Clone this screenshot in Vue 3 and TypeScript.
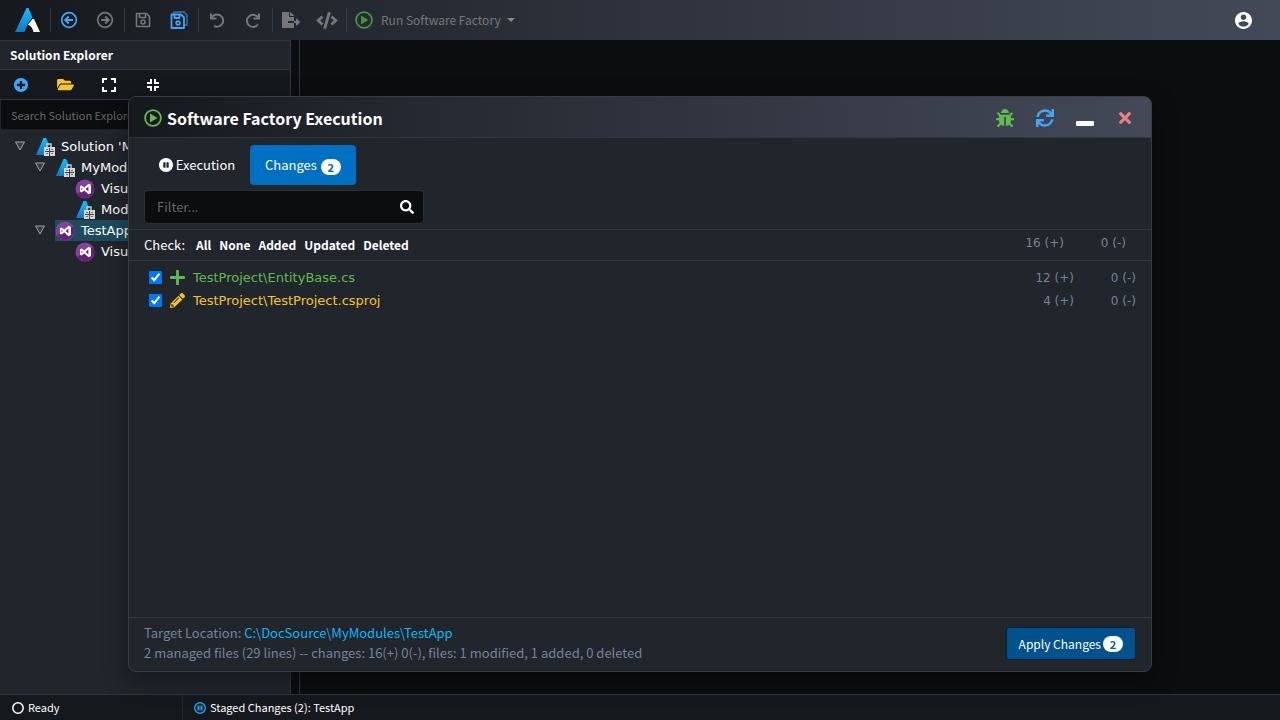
<script setup lang="ts">
import { computed, h, ref } from 'vue'

const shapes: Record<string, [string, string]> = {
  logo: ['0 0 26 26', '<defs><linearGradient id="lg" x1="0" y1="0" x2="0" y2="1"><stop offset="0" stop-color="#12c0ff"/><stop offset="1" stop-color="#1377c4"/></linearGradient></defs><path d="M11.500 1h2l4 9.500-4.500 6-3.500 8.500H0z" fill="url(#lg)"/><path d="M17.500 12h1.500l6 13h-6.500c-1-4-2.500-6-5.500-7.500z" fill="#fff"/>'],
  module: ['0 0 20 20', '<path d="M8.500 1H11l3.500 7-4 2v8H1z" fill="url(#lg)"/><path d="M12 10V7h4v3" fill="none" stroke="#c4c5c6" stroke-width="1.500"/><path d="M9 10h11v9H9z" fill="#d6d7d8"/><path d="M14.500 11v8M10 14.500h9" stroke="#3c4046" stroke-width="1"/><path d="M11 12.500h2M16 12.500h2M11 16.500h2M16 16.500h2" stroke="#6c7075" stroke-width="1"/>'],
  vs: ['0 0 20 20', '<circle cx="10" cy="10" r="9.500" fill="#84429a"/><path d="M2 15A9.500 9.500 0 0 0 18.500 5.800L15 6z" fill="#65207c"/><path fill="#fff" fill-rule="evenodd" d="M5 7.300l1.500-.8 2.800 2.100 4.200-3.800L16 6v8l-2.500 1.200-4.200-3.800-2.800 2.100L5 12.700zM6.400 8.700v2.600L7.900 10zM13.400 7.600v4.800L10.700 10z"/>'],
  back: ['0 0 18 18', '<g fill="none" stroke="currentColor" stroke-width="1.700"><circle cx="9" cy="9" r="7.300"/><path d="M13 9H6M8.800 5.500L5.300 9l3.500 3.500" stroke-width="2"/></g>'],
  forward: ['0 0 18 18', '<g fill="none" stroke="currentColor" stroke-width="1.700"><circle cx="9" cy="9" r="7.300"/><path d="M5 9h7M9.200 5.500L12.700 9l-3.500 3.500" stroke-width="2"/></g>'],
  save: ['0 0 18 18', '<g fill="none" stroke="currentColor" stroke-width="1.600"><path d="M2.500 2.500h10l3 3v10h-13z" stroke-linejoin="round"/><path d="M5.500 3v3.500h6V3"/><circle cx="9" cy="11" r="2"/></g>'],
  saveall: ['0 0 18 18', '<g fill="none" stroke="currentColor" stroke-width="1.800" stroke-linejoin="round"><path d="M4 3V1h10l3 3v10h-2" opacity=".5"/><path d="M1.500 3.500H11l3 3V17H1.500z"/><path d="M4.500 4v3h5V4"/><circle cx="8" cy="12" r="1.800"/></g>'],
  undo: ['0 0 18 18', '<g fill="none" stroke="currentColor" stroke-width="2"><path d="M3 2.500v5h5.500"/><path d="M3.500 7A6.100 6.100 0 1 1 6 14.800"/></g>'],
  redo: ['0 0 18 18', '<g fill="none" stroke="currentColor" stroke-width="2"><path d="M15 2.500v5H9.500"/><path d="M14.500 7A6.100 6.100 0 1 0 14 13.500"/></g>'],
  play: ['0 0 18 18', '<circle cx="9" cy="9" r="7.900" fill="none" stroke="currentColor" stroke-width="1.800"/><path d="M6 4.500v9L13.500 9z" fill="currentColor"/>'],
  export: ['0 0 576 512', '<path fill="currentColor" d="M384 121.900c0-6.300-2.500-12.400-7-16.900L279.100 7c-4.500-4.500-10.600-7-17-7H256v128h128zM571 308l-95.700-96.400c-10.100-10.100-27.400-3-27.400 11.300V288h-64v64h64v65.200c0 14.300 17.300 21.400 27.400 11.300L571 332c6.600-6.600 6.600-17.400 0-24zm-379 28v-32c0-8.800 7.200-16 16-16h176V160H248c-13.200 0-24-10.800-24-24V0H24C10.700 0 0 10.700 0 24v464c0 13.300 10.700 24 24 24h336c13.300 0 24-10.700 24-24V352H208c-8.800 0-16-7.200-16-16z"/>'],
  code: ['0 0 640 512', '<path fill="currentColor" d="M278.900 511.500l-61-17.700c-6.400-1.800-10-8.500-8.200-14.900L346.200 8.700c1.800-6.400 8.500-10 14.900-8.200l61 17.700c6.400 1.800 10 8.500 8.200 14.900L293.800 503.300c-1.900 6.400-8.500 10.100-14.900 8.200zm-114-112.200l43.500-46.400c4.600-4.900 4.300-12.700-.8-17.200L117 256l90.600-79.700c5.100-4.500 5.500-12.300.8-17.200l-43.500-46.400c-4.500-4.800-12.100-5.100-17-.5L3.800 247.200c-5.100 4.700-5.100 12.800 0 17.500l144.100 135.100c4.900 4.600 12.500 4.400 17-.5zm327.200.6l144.100-135.100c5.100-4.700 5.100-12.800 0-17.500L492.100 112.100c-4.800-4.500-12.400-4.300-17 .5L431.600 159c-4.600 4.900-4.300 12.700.8 17.200L523 256l-90.600 79.700c-5.100 4.500-5.500 12.300-.8 17.200l43.500 46.400c4.500 4.900 12.100 5.100 17 .6z"/>'],
  user: ['2 2 20 20', '<path fill="currentColor" d="M12 2C6.480 2 2 6.480 2 12s4.480 10 10 10 10-4.480 10-10S17.520 2 12 2zm0 3c1.900 0 3.300 1.400 3.300 3.200S13.900 11.400 12 11.400 8.700 10 8.700 8.200 10.100 5 12 5zm0 14.200c-2.500 0-4.710-1.280-6-3.220.03-1.990 4-3.080 6-3.080 1.990 0 5.970 1.090 6 3.080-1.290 1.940-3.500 3.220-6 3.220z"/>'],
  addcircle: ['8 8 496 496', '<path fill="currentColor" d="M256 8C119 8 8 119 8 256s111 248 248 248 248-111 248-248S393 8 256 8zm144 276c0 6.600-5.400 12-12 12h-92v92c0 6.600-5.400 12-12 12h-56c-6.600 0-12-5.400-12-12v-92h-92c-6.600 0-12-5.400-12-12v-56c0-6.600 5.400-12 12-12h92v-92c0-6.600 5.400-12 12-12h56c6.600 0 12 5.400 12 12v92h92c6.600 0 12 5.400 12 12v56z"/>'],
  folder: ['0 0 576 512', '<path fill="currentColor" d="M572.694 292.093L500.270 416.248A63.997 63.997 0 0 1 444.989 448H45.025c-18.523 0-30.064-20.093-20.731-36.093l72.424-124.155A64 64 0 0 1 152 256h399.964c18.523 0 30.064 20.093 20.730 36.093zM152 224h328v-48c0-26.510-21.490-48-48-48H272l-64-64H48C21.490 64 0 85.490 0 112v278.046l69.077-118.418C86.214 242.250 117.989 224 152 224z"/>'],
  expand: ['0 0 14 14', '<path d="M1 5V1h4M9 1h4v4M13 9v4H9M5 13H1V9" fill="none" stroke="currentColor" stroke-width="2"/>'],
  compress: ['0 0 14 14', '<path d="M5 1v4H1M9 1v4h4M13 9H9v4M5 13V9H1" fill="none" stroke="currentColor" stroke-width="2"/>'],
  pause: ['8 8 496 496', '<path fill="currentColor" d="M256 8C119 8 8 119 8 256s111 248 248 248 248-111 248-248S393 8 256 8zm-16 328c0 8.800-7.200 16-16 16h-48c-8.800 0-16-7.200-16-16V176c0-8.800 7.200-16 16-16h48c8.800 0 16 7.200 16 16v160zm112 0c0 8.800-7.200 16-16 16h-48c-8.800 0-16-7.200-16-16V176c0-8.800 7.200-16 16-16h48c8.800 0 16 7.200 16 16v160z"/>'],
  staged: ['0 0 12 12', '<circle cx="6" cy="6" r="5.300" fill="none" stroke="currentColor" stroke-width="1.400"/><path d="M3.500 3.500h2v5h-2zM6.500 3.500h2v5h-2z" fill="currentColor"/>'],
  ready: ['0 0 12 12', '<circle cx="6" cy="6" r="5.200" fill="none" stroke="currentColor" stroke-width="1.500"/>'],
  search: ['0 0 512 512', '<path fill="currentColor" d="M505 442.700L405.300 343c-4.500-4.500-10.600-7-17-7H372c27.600-35.300 44-79.700 44-128C416 93.100 322.900 0 208 0S0 93.100 0 208s93.100 208 208 208c48.300 0 92.700-16.400 128-44v16.300c0 6.400 2.500 12.500 7 17l99.700 99.700c9.400 9.400 24.600 9.400 33.900 0l28.300-28.300c9.400-9.400 9.400-24.600.1-34zM208 336c-70.700 0-128-57.200-128-128 0-70.700 57.200-128 128-128 70.700 0 128 57.200 128 128 0 70.700-57.200 128-128 128z"/>'],
  bug: ['0 0 512 512', '<path fill="currentColor" d="M511.988 288.900c-.478 17.430-15.217 31.100-32.653 31.100H424v16c0 21.864-4.882 42.584-13.600 61.145l60.228 60.228c12.496 12.497 12.496 32.758 0 45.255-12.498 12.497-32.759 12.496-45.256 0l-54.736-54.736C345.886 467.965 314.351 480 280 480V236c0-6.627-5.373-12-12-12h-24c-6.627 0-12 5.373-12 12v244c-34.351 0-65.886-12.035-90.636-32.108l-54.736 54.736c-12.498 12.497-32.759 12.496-45.256 0-12.496-12.497-12.496-32.758 0-45.255l60.228-60.228C92.882 378.584 88 357.864 88 336v-16H32.666C15.230 320 .491 306.330.013 288.900-.484 270.816 13.453 256 32 256h56v-58.745l-46.628-46.628c-12.496-12.497-12.496-32.758 0-45.255 12.498-12.497 32.758-12.497 45.256 0L141.255 160h229.489l54.627-54.627c12.498-12.497 32.758-12.497 45.256 0 12.496 12.497 12.496 32.758 0 45.255L424 197.255V256h56c18.547 0 32.484 14.816 31.988 32.900zM257 0c-61.856 0-112 50.144-112 112h224C369 50.144 318.856 0 257 0z"/>'],
  sync: ['0 0 512 512', '<path fill="currentColor" d="M440.650 12.570l4 82.770A247.160 247.160 0 0 0 255.830 8C134.730 8 33.910 94.920 12.290 209.820A12 12 0 0 0 24.090 224h49.050a12 12 0 0 0 11.670-9.260 175.910 175.910 0 0 1 317-56.940l-101.460-4.860a12 12 0 0 0-12.570 12v47.410a12 12 0 0 0 12 12H500a12 12 0 0 0 12-12V12a12 12 0 0 0-12-12h-47.370a12 12 0 0 0-11.980 12.570zM255.830 432a175.610 175.610 0 0 1-146-77.800l101.800 4.870a12 12 0 0 0 12.570-12v-47.400a12 12 0 0 0-12-12H12a12 12 0 0 0-12 12V500a12 12 0 0 0 12 12h47.350a12 12 0 0 0 12-12.600l-4.150-82.570A247.170 247.170 0 0 0 255.830 504c121.110 0 221.930-86.920 243.550-201.820a12 12 0 0 0-11.800-14.180h-49.050a12 12 0 0 0-11.670 9.260A175.860 175.860 0 0 1 255.830 432z"/>'],
  minimize: ['0 0 18 18', '<rect y="12" width="18" height="5" rx="1.200" fill="currentColor"/>'],
  close: ['0 80 352 352', '<path fill="currentColor" d="M242.720 256l100.070-100.070c12.280-12.280 12.280-32.190 0-44.480l-22.240-22.240c-12.280-12.280-32.190-12.280-44.480 0L176 189.280 75.930 89.210c-12.280-12.280-32.190-12.280-44.480 0L9.210 111.450c-12.280 12.280-12.280 32.190 0 44.480L109.280 256 9.210 356.070c-12.280 12.280-12.280 32.190 0 44.480l22.240 22.240c12.280 12.280 32.200 12.280 44.480 0L176 322.720l100.070 100.070c12.280 12.280 32.200 12.280 44.480 0l22.240-22.240c12.280-12.280 12.280-32.190 0-44.480L242.720 256z"/>'],
  added: ['0 0 14 14', '<path d="M7 1v12M1 7h12" stroke="currentColor" stroke-width="2.600" stroke-linecap="round"/>'],
  modified: ['0 0 512 512', '<path fill="currentColor" d="M497.900 142.100l-46.100 46.100c-4.700 4.700-12.300 4.700-17 0l-111-111c-4.700-4.700-4.700-12.300 0-17l46.100-46.100c18.700-18.700 49.100-18.700 67.900 0l60.100 60.100c18.800 18.700 18.800 49.100 0 67.900zM284.200 99.800L21.600 362.400.4 483.900c-2.900 16.400 11.400 30.600 27.800 27.800l121.500-21.300 262.600-262.600c4.700-4.700 4.700-12.300 0-17l-111-111c-4.800-4.700-12.400-4.700-17.100 0zM124.100 339.900c-5.500-5.500-5.500-14.300 0-19.800l154-154c5.500-5.500 14.300-5.500 19.800 0s5.500 14.300 0 19.800l-154 154c-5.500 5.500-14.300 5.500-19.800 0zM88 424h48v36.300l-64.500 11.300-31.100-31.100L51.700 376H88v48z"/>'],
  twisty: ['0 0 12 12', '<path d="M1.500 2h9L6 10z" fill="#3a3d41" stroke="#a0a2a5"/>'],
}

function Icon(props: { name: string }) {
  const [viewBox, body] = shapes[props.name]
  return h('svg', { viewBox, 'aria-hidden': 'true', innerHTML: body })
}
Icon.props = ['name']

interface Tool { icon: string; label: string; active?: boolean }
const toolGroups: Tool[][] = [
  [{ icon: 'back', label: 'Back', active: true }, { icon: 'forward', label: 'Forward' }],
  [{ icon: 'save', label: 'Save' }, { icon: 'saveall', label: 'Save all', active: true }],
  [{ icon: 'undo', label: 'Undo' }, { icon: 'redo', label: 'Redo' }],
  [{ icon: 'export', label: 'Export' }, { icon: 'code', label: 'Code' }],
]
const explorerTools = ['addcircle', 'folder', 'expand', 'compress']

interface Node { level: number; icon: string; label: string; open?: boolean; selected?: boolean }
const nodes: Node[] = [
  { level: 0, icon: 'module', label: "Solution 'MyModules'", open: true },
  { level: 1, icon: 'module', label: 'MyModules', open: true },
  { level: 2, icon: 'vs', label: 'Visual' },
  { level: 2, icon: 'module', label: 'Module' },
  { level: 1, icon: 'vs', label: 'TestApp', open: true, selected: true },
  { level: 2, icon: 'vs', label: 'Visual' },
]

interface Change { path: string; kind: 'added' | 'modified'; plus: number; minus: number; checked: boolean }
const changes = ref<Change[]>([
  { path: 'TestProject\\EntityBase.cs', kind: 'added', plus: 12, minus: 0, checked: true },
  { path: 'TestProject\\TestProject.csproj', kind: 'modified', plus: 4, minus: 0, checked: true },
])
const filter = ref('')
const query = ref('')
const shown = computed(() => changes.value.filter(c => c.path.toLowerCase().includes(filter.value.toLowerCase())))
const totalPlus = computed(() => changes.value.reduce((n, c) => n + c.plus, 0))
const totalMinus = computed(() => changes.value.reduce((n, c) => n + c.minus, 0))
const checks = ['All', 'None', 'Added', 'Updated', 'Deleted']
function check(which: string) {
  for (const c of changes.value) {
    c.checked = which === 'All' || (which === 'Added' && c.kind === 'added') || (which === 'Updated' && c.kind === 'modified')
  }
}
</script>

<template>
  <div class="app">
    <header class="topbar">
      <Icon name="logo" class="logo" />
      <div v-for="(group, g) in toolGroups" :key="g" class="group">
        <button v-for="t in group" :key="t.icon" type="button" class="tool" :class="[t.icon, { active: t.active }]" :aria-label="t.label">
          <Icon :name="t.icon" />
        </button>
      </div>
      <div class="group last">
        <button type="button" class="run"><Icon name="play" />Run Software Factory<span class="caret"></span></button>
      </div>
      <button type="button" class="account" aria-label="Account"><Icon name="user" /></button>
    </header>

    <div class="workspace">
      <aside class="sidebar">
        <h2>Solution Explorer</h2>
        <div class="explorer-tools">
          <button v-for="t in explorerTools" :key="t" type="button" :class="t" :aria-label="t"><Icon :name="t" /></button>
        </div>
        <input v-model="query" class="tree-search" type="text" placeholder="Search Solution Explorer" aria-label="Search Solution Explorer" />
        <ul class="tree">
          <li v-for="(n, i) in nodes" :key="i" :class="'level' + n.level">
            <span class="twist"><Icon v-if="n.open" name="twisty" /></span>
            <span class="node" :class="{ selected: n.selected }"><Icon :name="n.icon" />{{ n.label }}</span>
          </li>
        </ul>
      </aside>
      <main class="canvas"></main>
    </div>

    <footer class="status">
      <span class="ready"><Icon name="ready" />Ready</span>
      <span class="staged"><Icon name="staged" />Staged Changes (2): TestApp</span>
    </footer>

    <section class="dialog" role="dialog" aria-labelledby="dialog-title">
      <header class="titlebar">
        <Icon name="play" class="title-icon" />
        <h1 id="dialog-title">Software Factory Execution</h1>
        <button type="button" class="bug" aria-label="Debug"><Icon name="bug" /></button>
        <button type="button" class="sync" aria-label="Refresh"><Icon name="sync" /></button>
        <button type="button" class="minimize" aria-label="Minimize"><Icon name="minimize" /></button>
        <button type="button" class="close" aria-label="Close"><Icon name="close" /></button>
      </header>
      <nav class="tabs">
        <button type="button"><Icon name="pause" />Execution</button>
        <button type="button" class="current">Changes<span class="badge">2</span></button>
      </nav>
      <div class="filter">
        <input v-model="filter" type="text" placeholder="Filter..." aria-label="Filter" />
        <button type="button" aria-label="Search"><Icon name="search" /></button>
      </div>
      <div class="checkbar">
        <span class="check-label">Check:</span>
        <button v-for="c in checks" :key="c" type="button" @click="check(c)">{{ c }}</button>
        <span class="counts"><span>{{ totalPlus }} (+)</span><span>{{ totalMinus }} (-)</span></span>
      </div>
      <ul class="files">
        <li v-for="(c, i) in shown" :key="c.path">
          <input :id="'file' + i" v-model="c.checked" type="checkbox" />
          <label :for="'file' + i" :class="c.kind"><Icon :name="c.kind" />{{ c.path }}</label>
          <span class="counts"><span>{{ c.plus }} (+)</span><span>{{ c.minus }} (-)</span></span>
        </li>
      </ul>
      <footer class="summary">
        <div>
          <p>Target Location: <a href="#">C:\DocSource\MyModules\TestApp</a></p>
          <p>2 managed files (29 lines) -- changes: 16(+) 0(-), files: 1 modified, 1 added, 0 deleted</p>
        </div>
        <button type="button" class="apply">Apply Changes<span class="badge">2</span></button>
      </footer>
    </section>
  </div>
</template>

<style>
body { margin: 0; background: #0c0d0f; }
</style>

<style scoped>
* { box-sizing: border-box; }
.app { position: relative; display: flex; flex-direction: column; height: 100vh; overflow: hidden; background: #0c0d0f; color: #fff; font: 13px/20px "Noto Sans CJK JP", "Noto Sans CJK SC", sans-serif; }
button { display: flex; align-items: center; justify-content: center; padding: 0; border: 0; background: none; color: inherit; font: inherit; cursor: pointer; }
input { font: inherit; color: #fff; }
ul { list-style: none; margin: 0; padding: 0; }
h1, h2, p { margin: 0; }
svg { display: block; flex: none; }
::placeholder { color: #65676a; opacity: 1; }

.topbar { display: flex; align-items: center; flex: none; height: 40px; padding-left: 15px; background: linear-gradient(90deg, #15181c, #21252c 20%, #444958); }
.logo { width: 26px; height: 26px; margin-right: 9px; }
.group { display: flex; align-items: center; width: 74px; height: 24px; border-left: 1px solid #343841; }
.group.last { width: auto; }
.tool { width: 36px; height: 24px; color: #75777a; }
.tool svg { width: 18px; height: 18px; }
.tool.active { color: #42a5f5; }
.tool.export svg { width: 18px; height: 16px; }
.tool.code svg { width: 22px; height: 17px; }
.run { height: 24px; padding-left: 8px; color: #76787c; font-size: 12px; }
.run svg { width: 18px; height: 18px; margin-right: 8px; color: #4a9140; }
.caret { margin-left: 6px; border: 4px solid transparent; border-top-color: #85878a; border-bottom: 0; }
.account { margin-left: auto; margin-right: 28px; }
.account svg { width: 17px; height: 17px; }

.workspace { display: flex; flex: 1; min-height: 0; }
.sidebar { display: flex; flex-direction: column; flex: none; width: 291px; border-top: 1px solid #31353d; border-right: 1px solid #31353d; background: #21252c; }
.sidebar h2 { height: 29px; padding-left: 10px; border-bottom: 1px solid #31353d; font-size: 12px; line-height: 28px; font-weight: 600; }
.explorer-tools { display: flex; align-items: center; height: 30px; padding-left: 11px; gap: 24px; border-bottom: 1px solid #31353d; background: #15181c; }
.explorer-tools button { width: 20px; height: 20px; color: #fff; }
.explorer-tools svg { width: 14px; height: 14px; }
.explorer-tools .addcircle { color: #42a5f5; }
.explorer-tools .folder { color: #f4c430; }
.explorer-tools .folder svg { width: 17px; height: 15px; }
.tree-search { flex: none; height: 30px; padding: 0 10px; border: 1px solid #202329; border-top: 0; background: #0c0d0f; font-size: 11px; }
.tree { padding-top: 6px; font: 13px/21px "DejaVu Sans", sans-serif; overflow: hidden; }
.tree li { display: flex; height: 21px; white-space: nowrap; }
.level0 { padding-left: 14px; }
.level1 { padding-left: 34px; }
.level2 { padding-left: 54px; }
.twist { width: 21px; padding-top: 4px; }
.twist svg { width: 12px; height: 12px; }
.node { display: flex; align-items: center; flex: 1; gap: 6px; }
.node svg { width: 20px; height: 20px; }
.node.selected { background: #1d4c5c; }
.canvas { flex: 1; margin-left: 8px; border-left: 1px solid #31353d; }

.status { display: flex; flex: none; height: 26px; border-top: 1px solid #31353d; background: #15181c; font-size: 11px; line-height: 25px; }
.status span { display: flex; align-items: center; padding-left: 12px; gap: 4px; }
.status svg { width: 12px; height: 12px; }
.status .ready { width: 183px; border-right: 1px solid #202329; }
.status .staged { padding-left: 11px; }
.staged svg { color: #1ea7ee; }

.dialog { position: absolute; left: 10%; top: 96px; width: 80%; height: 80%; display: flex; flex-direction: column; border: 1px solid #3a3d40; border-radius: 8px; background: #21252c; overflow: hidden; box-shadow: 0 8px 24px rgba(0, 0, 0, .4); }
.titlebar { display: flex; align-items: center; flex: none; height: 41px; padding: 2px 14px 0 15px; border-bottom: 1px solid #31353d; background: linear-gradient(90deg, #15181c, #21252c 20%, #444958); }
.title-icon { width: 18px; height: 18px; margin-right: 5px; color: #60bb50; }
.titlebar h1 { flex: 1; font-size: 16px; font-weight: 600; }
.titlebar button { width: 24px; height: 24px; margin-left: 16px; }
.titlebar button svg { width: 18px; height: 18px; }
.titlebar .bug { color: #60bb50; }
.titlebar .sync { color: #42a5f5; }
.titlebar .close { color: #e88080; }
.titlebar .close svg { width: 12px; height: 12px; }
.tabs { display: flex; flex: none; padding: 7px 15px 0; }
.tabs button { height: 40px; padding: 0 15px; border-radius: 4px; }
.tabs button:first-child { width: 106px; }
.tabs .current { background: #0071c2; }
.tabs svg { width: 14px; height: 14px; margin-right: 3px; }
.badge { min-width: 20px; height: 16px; padding: 0 6px; border-radius: 8px; background: #fff; color: #0062a8; font-size: 11px; line-height: 16px; font-weight: 600; text-align: center; }
.tabs .badge { margin: 3px 0 0 4px; }
.filter { display: flex; flex: none; width: 280px; height: 34px; margin: 5px 15px; border: 1px solid #2b2f37; border-radius: 4px; background: #0c0d0f; }
.filter input { flex: 1; min-width: 0; padding: 0 12px; border: 0; background: none; }
.filter button { width: 32px; }
.filter svg { width: 14px; height: 14px; }
.checkbar { display: flex; align-items: center; flex: none; height: 32px; padding-left: 15px; border: solid #31353d; border-width: 1px 0; }
.check-label { margin-right: 3px; }
.checkbar button { margin-left: 8px; font-size: 12px; font-weight: 600; }
.counts { display: grid; grid-template-columns: 62px 62px; margin-left: auto; padding-right: 15px; color: #75839a; font: 12px/20px "DejaVu Sans", sans-serif; text-align: right; }
.checkbar .counts { padding-right: 25px; padding-bottom: 4px; }
.files { flex: 1; padding-top: 5px; font: 13px/23px "DejaVu Sans", sans-serif; overflow: auto; }
.files li { display: flex; align-items: center; height: 23px; padding-left: 20px; }
.files input { width: 13px; height: 13px; margin: 0; }
.files label { display: flex; align-items: center; margin-left: 8px; }
.files svg { width: 15px; height: 15px; margin-right: 8px; }
.added { color: #60bb50; }
.modified { color: #f4c430; }
.summary { display: flex; align-items: center; justify-content: space-between; flex: none; height: 54px; padding: 0 15px 2px; border-top: 1px solid #31353d; color: #75839a; }
.summary div { padding-bottom: 2px; }
.summary a { color: #12b5f5; text-decoration: none; }
.apply { height: 33px; padding: 0 12px; border: 1px solid #0b2135; border-radius: 3px; background: #00518c; color: #fff; font-size: 12px; }
.apply .badge { margin-left: 2px; }
</style>
